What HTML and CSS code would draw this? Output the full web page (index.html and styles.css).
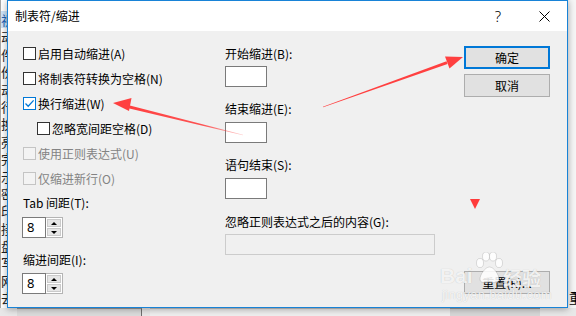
FILE: index.html
```html
<!DOCTYPE html>
<html lang="zh-CN">
<head>
  <meta charset="UTF-8">
  <title>制表符/缩进</title>
  <link rel="stylesheet" href="styles.css">
</head>
<body>
  <div class="desk">
    <div class="strip-left">
      <span class="sel">视</span><span>动</span><span>件</span><span>份</span><span>动</span><span>行</span><span>换</span><span>亮</span><span>完</span><span>示</span><span>密</span><span>印</span><span>接</span><span>盘</span><span>写</span><span>网</span><span>去</span>
    </div>

    <div class="dialog">
      <div class="titlebar">
        <span class="title">制表符/缩进</span>
        <span class="tb-btn help">?</span>
        <span class="tb-btn close">
          <svg width="11" height="11" viewBox="0 0 11 11"><path d="M0.5 0.5 L10.5 10.5 M10.5 0.5 L0.5 10.5" stroke="#000" stroke-width="1"/></svg>
        </span>
      </div>

      <div class="content">
        <div class="col-left">
          <div class="chk"><span class="box"></span>启用自动缩进(A)</div>
          <div class="chk"><span class="box"></span>将制表符转换为空格(N)</div>
          <div class="chk on">
            <span class="box"><svg width="11" height="11" viewBox="0 0 11 11"><path d="M1.5 5.5 L4.2 8.2 L9.6 2.4" fill="none" stroke="#0078d7" stroke-width="1.3"/></svg></span>换行缩进(W)
          </div>
          <div class="chk sub"><span class="box"></span>忽略宽间距空格(D)</div>
          <div class="chk off"><span class="box"></span>使用正则表达式(U)</div>
          <div class="chk off"><span class="box"></span>仅缩进新行(O)</div>

          <div class="lbl first">Tab 间距(T):</div>
          <div class="spin">
            <span class="spin-field">8</span>
            <span class="spin-btns"><i class="up"></i><i class="down"></i></span>
          </div>
          <div class="lbl">缩进间距(I):</div>
          <div class="spin near">
            <span class="spin-field">8</span>
            <span class="spin-btns"><i class="up"></i><i class="down"></i></span>
          </div>
        </div>

        <div class="col-mid">
          <div class="lbl">开始缩进(B):</div>
          <div class="field first"></div>
          <div class="lbl">结束缩进(E):</div>
          <div class="field"></div>
          <div class="lbl">语句结束(S):</div>
          <div class="field"></div>
          <div class="lbl wide-lbl">忽略正则表达式之后的内容(G):</div>
          <div class="field wide first"></div>
        </div>

        <div class="col-right">
          <div class="btn def">确定</div>
          <div class="btn">取消</div>
          <div class="btn reset">重置(R)...</div>
        </div>
      </div>
    </div>

    <div class="strip-right"><span>重</span></div>
  </div>

  <div class="bottom-strip">
    <span class="seg a"></span><span class="seg b"></span><span class="seg c"></span>
  </div>

  <div class="watermark">
    <span class="wm-bai">Bai</span>
    <svg class="wm-paw" width="28" height="32" viewBox="0 0 28 32">
      <g fill="#fff" fill-opacity="0.85" stroke="#000" stroke-opacity="0.12" stroke-width="1">
        <ellipse cx="5" cy="11" rx="3.5" ry="4.5"/>
        <ellipse cx="11" cy="4.5" rx="3.5" ry="4.5"/>
        <ellipse cx="18" cy="4.5" rx="3.5" ry="4.5"/>
        <ellipse cx="24" cy="11" rx="3.5" ry="4.5"/>
        <path d="M14.5 15 C10 15 5 23 5 27 C5 31 9 31 14.5 30 C20 31 24 31 24 27 C24 23 19 15 14.5 15 Z"/>
      </g>
    </svg>
    <span class="wm-jy">经验</span>
    <span class="wm-url">jingyan.baidu.com</span>
  </div>

  <svg class="marks" width="576" height="316" viewBox="0 0 576 316">
    <defs>
      <linearGradient id="fade1" gradientUnits="userSpaceOnUse" x1="243" y1="135" x2="127" y2="106">
        <stop offset="0" stop-color="#ff4040" stop-opacity="0.25"/>
        <stop offset="0.35" stop-color="#ff4040" stop-opacity="0.9"/>
        <stop offset="1" stop-color="#ff4040"/>
      </linearGradient>
    </defs>
    <polygon points="243.1,134.7 242.9,135.3 126.2,107.8 127.0,104.8" fill="url(#fade1)"/>
    <polygon points="113,103 131.5,98 129,111" fill="#ff4040"/>
    <polygon points="323.1,107.3 322.9,106.7 446.5,61.3 447.5,64.1" fill="#ff4040"/>
    <polygon points="463,57 445,56.5 449.5,68.5" fill="#ff4040"/>
    <polygon points="470,199 480,199 475,209" fill="#ff3b3b"/>
  </svg>
</body>
</html>
```

FILE: styles.css
```css
* {
  box-sizing: border-box;
}
html, body {
  margin: 0;
}
body {
  width: 576px;
  height: 316px;
  overflow: hidden;
  position: relative;
  font-family: "Noto Sans CJK SC", "Microsoft YaHei", sans-serif;
  font-size: 12px;
  color: #000;
  background: #ececec;
}

.desk {
  display: flex;
  height: 308px;
}
.strip-left {
  width: 7px;
  overflow: hidden;
  background: #fff;
  border-left: 1px solid #a8a8a8;
  padding-top: 11px;
}
.strip-left span {
  display: block;
  width: 14px;
  height: 17.4px;
  line-height: 17px;
  font-size: 13px;
  color: #222;
}
.strip-left .sel {
  background: #cde4f8;
  color: #1a5fb4;
}
.strip-right {
  width: 8px;
  background: #f6f6f6;
  overflow: hidden;
  display: flex;
  align-items: flex-end;
}
.strip-right span {
  font-size: 13px;
  line-height: 16px;
  margin-left: 1px;
  margin-bottom: 2px;
}

.dialog {
  width: 561px;
  border: 1px solid #1883d7;
  background: #f0f0f0;
  display: flex;
  flex-direction: column;
  position: relative;
  z-index: 1;
  box-shadow: 0 1px 7px rgba(0, 0, 0, 0.35);
}
.titlebar {
  height: 30px;
  background: #fff;
  display: flex;
  align-items: center;
}
.title {
  flex: 1;
  padding-left: 7px;
  line-height: 16px;
}
.tb-btn {
  width: 46px;
  height: 30px;
  display: flex;
  align-items: center;
  justify-content: center;
}
.help {
  font-family: "Noto Sans", sans-serif;
  font-size: 15px;
  font-weight: 300;
}

.content {
  flex: 1;
  display: grid;
  grid-template-columns: 202px 239px 86px;
  padding: 0 17px 14px 15px;
}

/* left column */
.col-left {
  padding-top: 10px;
}
.chk {
  height: 25px;
  display: flex;
  align-items: center;
  gap: 2px;
  line-height: 16px;
  white-space: nowrap;
}
.box {
  width: 13px;
  height: 13px;
  flex: none;
  border: 1px solid #333;
  background: #fff;
  display: flex;
}
.chk.on .box {
  border-color: #0078d7;
}
.chk.sub {
  padding-left: 14px;
}
.chk.off {
  color: #838383;
}
.chk.off .box {
  border-color: #c4c4c4;
  background: #f3f3f3;
}

.lbl {
  line-height: 16px;
  white-space: nowrap;
  margin-top: 14px;
}
.col-left .lbl.first {
  margin-top: 4px;
}
.spin {
  display: flex;
  width: 41px;
  height: 21px;
  margin: 6px 0 0 -1px;
}
.spin.near {
  margin-top: 5px;
}
.spin-field {
  width: 24px;
  border: 1px solid #7a7a7a;
  background: #fff;
  padding-left: 4px;
  line-height: 19px;
  font-size: 13px;
  font-family: "Noto Sans", sans-serif;
}
.spin-btns {
  width: 17px;
  display: flex;
  flex-direction: column;
  gap: 1px;
  padding: 1px;
  border: 1px solid #b4b4b4;
  border-left: none;
  background: #fff;
}
.spin-btns i {
  flex: 1;
  background: #e6e6e6;
  border: 1px solid #cacaca;
  display: flex;
  align-items: center;
  justify-content: center;
}
.spin-btns i::after {
  content: "";
  border-left: 3px solid transparent;
  border-right: 3px solid transparent;
}
.spin-btns .up::after {
  border-bottom: 3px solid #000;
}
.spin-btns .down::after {
  border-top: 3px solid #000;
}

/* middle column */
.col-mid {
  padding-top: 15px;
}
.col-mid .lbl:first-child {
  margin-top: 0;
}
.col-mid .wide-lbl {
  margin-top: 15px;
}
.field {
  width: 42px;
  height: 21px;
  margin-top: 5px;
  border: 1px solid #7a7a7a;
  background: #fff;
}
.field.first {
  margin-top: 4px;
}
.field.wide {
  width: 210px;
  border-color: #cccccc;
  background: #f0f0f0;
}

/* right column */
.col-right {
  padding-top: 15px;
  display: flex;
  flex-direction: column;
}
.btn {
  height: 23px;
  border: 1px solid #adadad;
  background: #e1e1e1;
  display: flex;
  align-items: center;
  justify-content: center;
  line-height: 16px;
}
.btn + .btn {
  margin-top: 5px;
}
.btn.def {
  border: 2px solid #0078d7;
}
.btn.reset {
  margin-top: auto;
}

.bottom-strip {
  height: 8px;
  display: flex;
  background: #e8e8e8;
}
.seg {
  height: 8px;
  border-top: 1px solid #9a9a9a;
}
.seg.a {
  width: 125px;
  margin-left: 17px;
  border-right: 1px solid #6f6f6f;
  background: #dcdcdc;
}
.seg.b {
  width: 300px;
  margin-left: 8px;
  background: #efefef;
  border-top-color: #c8c8c8;
}
.seg.c {
  width: 90px;
  margin-left: 0;
  background: #d8d8d8;
}

/* watermark and annotations lie over the dialog */
.watermark {
  position: absolute;
  left: 0;
  top: 0;
  width: 576px;
  height: 316px;
  z-index: 4;
  pointer-events: none;
  color: rgba(255, 255, 255, 0.82);
  text-shadow: 0 0 1px rgba(0, 0, 0, 0.22);
}
.wm-bai {
  position: absolute;
  left: 440px;
  top: 264px;
  font-family: "Liberation Sans", Arial, sans-serif;
  font-weight: bold;
  font-size: 21px;
  line-height: 24px;
}
.wm-paw {
  position: absolute;
  left: 475px;
  top: 252px;
}
.wm-jy {
  position: absolute;
  left: 503px;
  top: 267px;
  font-size: 19px;
  line-height: 22px;
  font-weight: bold;
}
.wm-url {
  position: absolute;
  left: 442px;
  top: 287px;
  font-family: "Liberation Sans", Arial, sans-serif;
  font-size: 13px;
  line-height: 15px;
  letter-spacing: 0.3px;
}
.marks {
  position: absolute;
  left: 0;
  top: 0;
  z-index: 5;
  pointer-events: none;
}
```
